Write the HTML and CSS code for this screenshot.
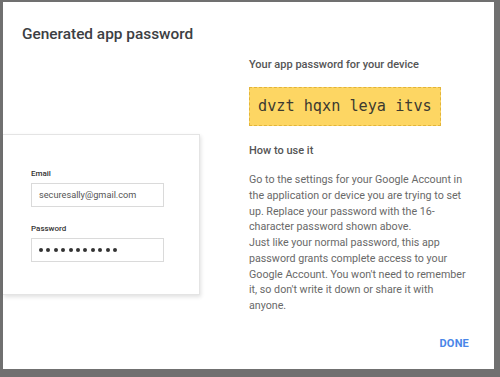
FILE: index.html
```html
<!DOCTYPE html>
<html>
<head>
<meta charset="utf-8">
<link rel="stylesheet" href="styles.css">
</head>
<body>
<div class="dialog">
  <h1 class="title">Generated app password</h1>
  <div class="content">
    <div class="illustration">
      <div class="card">
        <label class="field-label">Email</label>
        <div class="input">securesally@gmail.com</div>
        <label class="field-label pw-label">Password</label>
        <div class="input dots"><span></span><span></span><span></span><span></span><span></span><span></span><span></span><span></span><span></span><span></span><span></span></div>
      </div>
    </div>
    <div class="info">
      <h2 class="subhead">Your app password for your device</h2>
      <div class="password">dvzt hqxn leya itvs</div>
      <h2 class="subhead how">How to use it</h2>
      <p class="desc">Go to the settings for your Google Account in the application or device you are trying to set up. Replace your password with the 16-character password shown above.<br>Just like your normal password, this app password grants complete access to your Google Account. You won't need to remember it, so don't write it down or share it with anyone.</p>
    </div>
  </div>
  <div class="actions"><span class="done">DONE</span></div>
</div>
</body>
</html>
```
FILE: styles.css
```css
html, body {
  margin: 0;
  padding: 0;
}
body {
  background: #707070;
  width: 500px;
  height: 377px;
  overflow: hidden;
  font-family: Roboto, "Liberation Sans", sans-serif;
}
.dialog {
  margin: 2px 6px 0 3px;
  width: 491px;
  height: 367px;
  background: #fff;
  display: flex;
  flex-direction: column;
  box-sizing: border-box;
}
.title {
  margin: 0;
  padding: 22px 0 0 19px;
  font-size: 15.4px;
  line-height: 20px;
  font-weight: 500;
  color: #3c4043;
}
.content {
  display: flex;
  margin-top: 14px;
}
.illustration {
  width: 246px;
  flex: none;
}
.card {
  margin-top: 76px;
  width: 197px;
  height: 161px;
  box-sizing: border-box;
  padding: 34px 0 0 28px;
  border: 1px solid #e4e4e4;
  border-left: none;
  box-shadow: 1px 2px 4px rgba(0,0,0,0.12);
  background: #fff;
}
.field-label {
  display: block;
  font-size: 8px;
  line-height: 10px;
  font-weight: 500;
  color: #333;
}
.pw-label {
  margin-top: 17px;
}
.input {
  margin-top: 4px;
  width: 133px;
  height: 24px;
  box-sizing: border-box;
  border: 1px solid #dadada;
  padding-left: 7px;
  font-size: 9.2px;
  line-height: 22px;
  color: #555;
}
.dots {
  display: flex;
  align-items: center;
  gap: 3.4px;
}
.dots span {
  width: 4px;
  height: 4px;
  border-radius: 50%;
  background: #333;
}
.info {
  width: 224px;
  flex: none;
}
.subhead {
  margin: 0;
  font-size: 11px;
  line-height: 14px;
  font-weight: 500;
  color: #555;
}
.password {
  margin-top: 15px;
  width: 192px;
  height: 39px;
  box-sizing: border-box;
  background: #fdd663;
  border: 1px dashed #e2b43a;
  padding-left: 8px;
  font-family: "DejaVu Sans Mono", "Liberation Mono", monospace;
  font-size: 15.2px;
  line-height: 37px;
  color: #3c3a30;
}
.how {
  margin-top: 18px;
}
.desc {
  margin: 14px 0 0;
  font-size: 10.7px;
  line-height: 15.75px;
  color: #696969;
}
.actions {
  margin-top: auto;
  display: flex;
  justify-content: flex-end;
  padding: 0 25px 18px 0;
}
.done {
  font-size: 11px;
  line-height: 14px;
  font-weight: 700;
  color: #4a86e8;
  letter-spacing: 0.2px;
}
```
